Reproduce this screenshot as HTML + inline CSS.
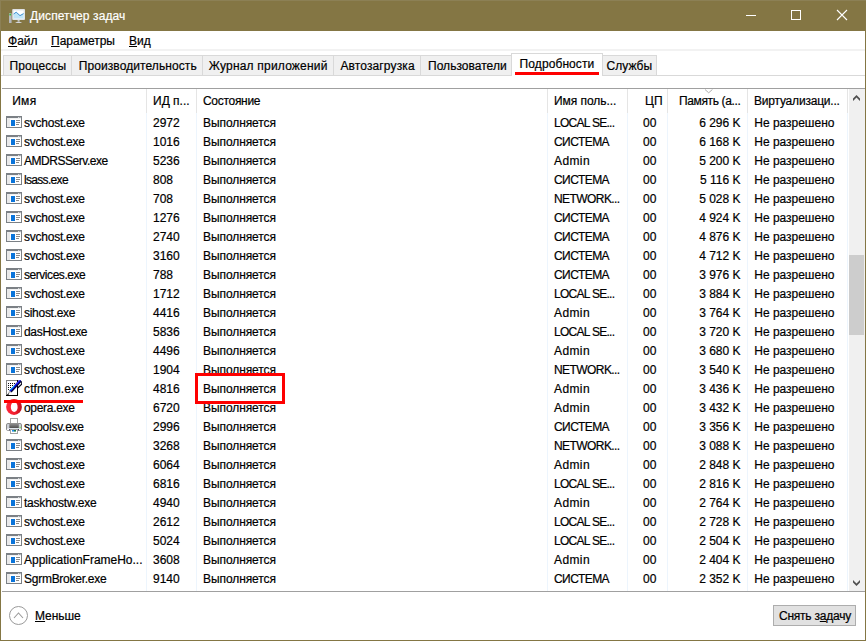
<!DOCTYPE html>
<html lang="ru"><head><meta charset="utf-8"><title>Диспетчер задач</title>
<style>
html,body{margin:0;padding:0;}
body{width:866px;height:641px;overflow:hidden;background:#fff;font-family:"Liberation Sans",sans-serif;font-size:12px;color:#000;position:relative;-webkit-text-stroke:0.2px #000;}
#win{position:absolute;left:0;top:0;width:864px;height:639px;border:1px solid #847644;background:#fff;overflow:hidden;}
.abs{position:absolute;white-space:nowrap;}
#title{position:absolute;left:0;top:0;width:866px;height:31px;background:#847644;box-shadow:inset 1px 1px 0 #8c8055;}
#title .t{-webkit-text-stroke:0.2px #fff;position:absolute;left:30px;top:9px;color:#fff;font-size:12px;line-height:15px;letter-spacing:0.1px;}
#menu span{position:absolute;top:34px;line-height:15px;}
u{text-decoration:underline;text-underline-offset:1px;}
.tab{position:absolute;top:55px;height:21px;box-sizing:border-box;border:1px solid #d9d9d9;border-left:none;background:#f0f0f0;line-height:21px;text-align:center;white-space:nowrap;}
.tab.sel{top:53px;height:23px;background:#fff;border:1px solid #d9d9d9;border-bottom:none;line-height:22px;z-index:2;}
.tl{position:absolute;line-height:15px;white-space:nowrap;z-index:3}
#tabline{position:absolute;left:1px;top:49px;width:864px;height:2px;background:#f2f2f2;}
#tbl{position:absolute;left:2px;top:88px;width:863px;height:504px;box-sizing:border-box;border-top:1px solid #a0a0a0;border-bottom:1px solid #a0a0a0;background:#fff;}
.h{position:absolute;top:94px;line-height:15px;white-space:nowrap;}
.hs{position:absolute;top:89px;width:1px;height:24px;background:#e5e5e5;}
.bs{position:absolute;top:113px;width:1px;height:478px;background:#edf5fd;}
.r{position:absolute;left:0;width:848px;height:19px;line-height:19px;white-space:nowrap;}
.r .c{position:absolute;top:0;}
.r .ic{position:absolute;left:6px;top:0px;}
.n{left:24px}
.p{left:153px}
.s{left:203px;letter-spacing:-0.08px}
.u{left:554px}
.u-l{letter-spacing:-0.72px}
.u-s{letter-spacing:-0.55px}
.u-n{letter-spacing:-0.57px}
.u-a{letter-spacing:0.4px}
.cpu{left:643px}
.m{right:107.5px}
.v{left:754.3px;letter-spacing:-0.02px}
#sb{position:absolute;left:849px;top:89px;width:16px;height:502px;background:#f0f0f0;}
#thumb{position:absolute;left:849px;top:255px;width:15px;height:80px;background:#cdcdcd;}
#btn{position:absolute;left:773px;top:605px;width:83px;height:21px;box-sizing:border-box;border:1px solid #adadad;background:#e1e1e1;text-align:center;line-height:21px;letter-spacing:-0.22px;padding-left:1px}
</style></head><body>
<div id="win"></div>
<div id="title"><svg class="abs" style="left:8px;top:8px" width="18" height="16" viewBox="0 0 18 16"><rect x="1" y="5.2" width="2.6" height="9.8" fill="#b4b7bb"/><rect x="1.4" y="5.8" width="1.6" height="1.6" fill="#30c030"/><rect x="4.2" y="1" width="12.8" height="11" rx="1" fill="#dfe2e5"/><rect x="5.6" y="2.4" width="10" height="8.2" fill="#fff"/><path d="M5.6 6 L8.2 4.2 L12 7.6 L15.6 5.6 V10.6 H5.6Z" fill="#bfe4f7"/><path d="M5.6 6 L8.2 4.2 L12 7.6 L15.6 5.6" stroke="#2a84cc" stroke-width="0.9" fill="none"/><rect x="9.6" y="12" width="2" height="1.6" fill="#c4c7ca"/><path d="M7 15 Q10.6 12.4 14.2 15Z" fill="#d4d7da"/></svg><span class="t">Диспетчер задач</span>
<svg class="abs" style="left:745px;top:10px" width="12" height="12" viewBox="0 0 12 12"><path d="M1 5.5H11" stroke="#fff" stroke-width="1"/></svg>
<svg class="abs" style="left:790px;top:9px" width="12" height="12" viewBox="0 0 12 12"><rect x="1.5" y="1.5" width="9" height="9" fill="none" stroke="#fff" stroke-width="1"/></svg>
<svg class="abs" style="left:836px;top:9px" width="12" height="12" viewBox="0 0 12 12"><path d="M1 1L11 11M11 1L1 11" stroke="#fff" stroke-width="1.1"/></svg>
</div>
<div id="menu"><span style="left:8px"><u>Ф</u>айл</span><span style="left:51px"><u>П</u>араметры</span><span style="left:129px"><u>В</u>ид</span></div>
<div id="tabline"></div><div class="abs" style="left:1px;top:75px;width:864px;height:1px;background:#d9d9d9"></div>
<div class="tab" style="left:3px;width:69px;border-left:1px solid #d9d9d9"></div>
<span class="tl" style="left:9.6px;top:59px;letter-spacing:0.06px">Процессы</span>
<div class="tab" style="left:72px;width:131px"></div>
<span class="tl" style="left:78.7px;top:59px;letter-spacing:0.09px">Производительность</span>
<div class="tab" style="left:203px;width:131px"></div>
<span class="tl" style="left:208.8px;top:59px;letter-spacing:0.2px">Журнал приложений</span>
<div class="tab" style="left:334px;width:87px"></div>
<span class="tl" style="left:340.4px;top:59px;letter-spacing:0.13px">Автозагрузка</span>
<div class="tab" style="left:421px;width:91px"></div>
<span class="tl" style="left:428.0px;top:59px;letter-spacing:0.03px">Пользователи</span>
<div class="tab sel" style="left:511px;width:92px"></div>
<span class="tl" style="left:519.6px;top:57px;letter-spacing:0.09px">Подробности</span>
<div class="tab" style="left:603px;width:54px"></div>
<span class="tl" style="left:606.6px;top:59px;letter-spacing:0px">Службы</span>
<div class="abs" style="left:515px;top:72px;width:84px;height:3px;background:#fe0000;z-index:3"></div>
<div id="tbl"></div>
<span class="h" style="left:12.2px;letter-spacing:0.3px">Имя</span>
<span class="h" style="left:153px">ИД п...</span>
<span class="h" style="left:203px;letter-spacing:-0.3px">Состояние</span>
<span class="h" style="left:554px;letter-spacing:-0.05px">Имя поль...</span>
<span class="h" style="left:645px">ЦП</span>
<span class="h" style="left:679px;letter-spacing:-0.37px">Память (а...</span>
<span class="h" style="left:754px;letter-spacing:-0.2px">Виртуализаци...</span>
<div class="hs" style="left:146px"></div><div class="hs" style="left:196px"></div><div class="hs" style="left:547px"></div><div class="hs" style="left:627px"></div><div class="hs" style="left:667px"></div><div class="hs" style="left:747px"></div><div class="hs" style="left:847px"></div>
<div class="bs" style="left:146px"></div><div class="bs" style="left:196px"></div><div class="bs" style="left:547px"></div><div class="bs" style="left:627px"></div><div class="bs" style="left:667px"></div><div class="bs" style="left:747px"></div><div class="bs" style="left:847px"></div>
<div class="r" style="top:114px"><svg class="ic" width="16" height="16" viewBox="0 0 16 16"><rect x="0.5" y="2.5" width="15" height="11" fill="#fff" stroke="#7b8085"/><rect x="0" y="2" width="16" height="2.1" fill="#7b8085"/><rect x="12" y="3" width="1" height="1" fill="#d8dadc"/><rect x="13.6" y="3" width="1" height="1" fill="#d8dadc"/><rect x="1" y="4.2" width="3" height="8.8" fill="#e9e9e9"/><rect x="5" y="6" width="4" height="6" fill="#0a74da"/><rect x="10" y="6" width="4" height="1" fill="#8a8a8a"/><rect x="10" y="8" width="4" height="1" fill="#8a8a8a"/><rect x="10" y="10" width="3" height="1" fill="#8a8a8a"/></svg><span class="c n" style="letter-spacing:-0.24px">svchost.exe</span><span class="c p">2972</span><span class="c s">Выполняется</span><span class="c u u-l">LOCAL SE...</span><span class="c cpu">00</span><span class="c m">6 296 K</span><span class="c v">Не разрешено</span></div>
<div class="r" style="top:133px"><svg class="ic" width="16" height="16" viewBox="0 0 16 16"><rect x="0.5" y="2.5" width="15" height="11" fill="#fff" stroke="#7b8085"/><rect x="0" y="2" width="16" height="2.1" fill="#7b8085"/><rect x="12" y="3" width="1" height="1" fill="#d8dadc"/><rect x="13.6" y="3" width="1" height="1" fill="#d8dadc"/><rect x="1" y="4.2" width="3" height="8.8" fill="#e9e9e9"/><rect x="5" y="6" width="4" height="6" fill="#0a74da"/><rect x="10" y="6" width="4" height="1" fill="#8a8a8a"/><rect x="10" y="8" width="4" height="1" fill="#8a8a8a"/><rect x="10" y="10" width="3" height="1" fill="#8a8a8a"/></svg><span class="c n" style="letter-spacing:-0.24px">svchost.exe</span><span class="c p">1016</span><span class="c s">Выполняется</span><span class="c u u-s">СИСТЕМА</span><span class="c cpu">00</span><span class="c m">6 168 K</span><span class="c v">Не разрешено</span></div>
<div class="r" style="top:152px"><svg class="ic" width="16" height="16" viewBox="0 0 16 16"><rect x="0.5" y="2.5" width="15" height="11" fill="#fff" stroke="#7b8085"/><rect x="0" y="2" width="16" height="2.1" fill="#7b8085"/><rect x="12" y="3" width="1" height="1" fill="#d8dadc"/><rect x="13.6" y="3" width="1" height="1" fill="#d8dadc"/><rect x="1" y="4.2" width="3" height="8.8" fill="#e9e9e9"/><rect x="5" y="6" width="4" height="6" fill="#0a74da"/><rect x="10" y="6" width="4" height="1" fill="#8a8a8a"/><rect x="10" y="8" width="4" height="1" fill="#8a8a8a"/><rect x="10" y="10" width="3" height="1" fill="#8a8a8a"/></svg><span class="c n" style="letter-spacing:-0.46px">AMDRSServ.exe</span><span class="c p">5236</span><span class="c s">Выполняется</span><span class="c u u-a">Admin</span><span class="c cpu">00</span><span class="c m">5 200 K</span><span class="c v">Не разрешено</span></div>
<div class="r" style="top:171px"><svg class="ic" width="16" height="16" viewBox="0 0 16 16"><rect x="0.5" y="2.5" width="15" height="11" fill="#fff" stroke="#7b8085"/><rect x="0" y="2" width="16" height="2.1" fill="#7b8085"/><rect x="12" y="3" width="1" height="1" fill="#d8dadc"/><rect x="13.6" y="3" width="1" height="1" fill="#d8dadc"/><rect x="1" y="4.2" width="3" height="8.8" fill="#e9e9e9"/><rect x="5" y="6" width="4" height="6" fill="#0a74da"/><rect x="10" y="6" width="4" height="1" fill="#8a8a8a"/><rect x="10" y="8" width="4" height="1" fill="#8a8a8a"/><rect x="10" y="10" width="3" height="1" fill="#8a8a8a"/></svg><span class="c n" style="letter-spacing:-0.68px">lsass.exe</span><span class="c p">808</span><span class="c s">Выполняется</span><span class="c u u-s">СИСТЕМА</span><span class="c cpu">00</span><span class="c m">5 116 K</span><span class="c v">Не разрешено</span></div>
<div class="r" style="top:190px"><svg class="ic" width="16" height="16" viewBox="0 0 16 16"><rect x="0.5" y="2.5" width="15" height="11" fill="#fff" stroke="#7b8085"/><rect x="0" y="2" width="16" height="2.1" fill="#7b8085"/><rect x="12" y="3" width="1" height="1" fill="#d8dadc"/><rect x="13.6" y="3" width="1" height="1" fill="#d8dadc"/><rect x="1" y="4.2" width="3" height="8.8" fill="#e9e9e9"/><rect x="5" y="6" width="4" height="6" fill="#0a74da"/><rect x="10" y="6" width="4" height="1" fill="#8a8a8a"/><rect x="10" y="8" width="4" height="1" fill="#8a8a8a"/><rect x="10" y="10" width="3" height="1" fill="#8a8a8a"/></svg><span class="c n" style="letter-spacing:-0.24px">svchost.exe</span><span class="c p">708</span><span class="c s">Выполняется</span><span class="c u u-n">NETWORK...</span><span class="c cpu">00</span><span class="c m">5 028 K</span><span class="c v">Не разрешено</span></div>
<div class="r" style="top:209px"><svg class="ic" width="16" height="16" viewBox="0 0 16 16"><rect x="0.5" y="2.5" width="15" height="11" fill="#fff" stroke="#7b8085"/><rect x="0" y="2" width="16" height="2.1" fill="#7b8085"/><rect x="12" y="3" width="1" height="1" fill="#d8dadc"/><rect x="13.6" y="3" width="1" height="1" fill="#d8dadc"/><rect x="1" y="4.2" width="3" height="8.8" fill="#e9e9e9"/><rect x="5" y="6" width="4" height="6" fill="#0a74da"/><rect x="10" y="6" width="4" height="1" fill="#8a8a8a"/><rect x="10" y="8" width="4" height="1" fill="#8a8a8a"/><rect x="10" y="10" width="3" height="1" fill="#8a8a8a"/></svg><span class="c n" style="letter-spacing:-0.24px">svchost.exe</span><span class="c p">1276</span><span class="c s">Выполняется</span><span class="c u u-s">СИСТЕМА</span><span class="c cpu">00</span><span class="c m">4 924 K</span><span class="c v">Не разрешено</span></div>
<div class="r" style="top:228px"><svg class="ic" width="16" height="16" viewBox="0 0 16 16"><rect x="0.5" y="2.5" width="15" height="11" fill="#fff" stroke="#7b8085"/><rect x="0" y="2" width="16" height="2.1" fill="#7b8085"/><rect x="12" y="3" width="1" height="1" fill="#d8dadc"/><rect x="13.6" y="3" width="1" height="1" fill="#d8dadc"/><rect x="1" y="4.2" width="3" height="8.8" fill="#e9e9e9"/><rect x="5" y="6" width="4" height="6" fill="#0a74da"/><rect x="10" y="6" width="4" height="1" fill="#8a8a8a"/><rect x="10" y="8" width="4" height="1" fill="#8a8a8a"/><rect x="10" y="10" width="3" height="1" fill="#8a8a8a"/></svg><span class="c n" style="letter-spacing:-0.24px">svchost.exe</span><span class="c p">2740</span><span class="c s">Выполняется</span><span class="c u u-s">СИСТЕМА</span><span class="c cpu">00</span><span class="c m">4 876 K</span><span class="c v">Не разрешено</span></div>
<div class="r" style="top:247px"><svg class="ic" width="16" height="16" viewBox="0 0 16 16"><rect x="0.5" y="2.5" width="15" height="11" fill="#fff" stroke="#7b8085"/><rect x="0" y="2" width="16" height="2.1" fill="#7b8085"/><rect x="12" y="3" width="1" height="1" fill="#d8dadc"/><rect x="13.6" y="3" width="1" height="1" fill="#d8dadc"/><rect x="1" y="4.2" width="3" height="8.8" fill="#e9e9e9"/><rect x="5" y="6" width="4" height="6" fill="#0a74da"/><rect x="10" y="6" width="4" height="1" fill="#8a8a8a"/><rect x="10" y="8" width="4" height="1" fill="#8a8a8a"/><rect x="10" y="10" width="3" height="1" fill="#8a8a8a"/></svg><span class="c n" style="letter-spacing:-0.24px">svchost.exe</span><span class="c p">3160</span><span class="c s">Выполняется</span><span class="c u u-s">СИСТЕМА</span><span class="c cpu">00</span><span class="c m">4 712 K</span><span class="c v">Не разрешено</span></div>
<div class="r" style="top:266px"><svg class="ic" width="16" height="16" viewBox="0 0 16 16"><rect x="0.5" y="2.5" width="15" height="11" fill="#fff" stroke="#7b8085"/><rect x="0" y="2" width="16" height="2.1" fill="#7b8085"/><rect x="12" y="3" width="1" height="1" fill="#d8dadc"/><rect x="13.6" y="3" width="1" height="1" fill="#d8dadc"/><rect x="1" y="4.2" width="3" height="8.8" fill="#e9e9e9"/><rect x="5" y="6" width="4" height="6" fill="#0a74da"/><rect x="10" y="6" width="4" height="1" fill="#8a8a8a"/><rect x="10" y="8" width="4" height="1" fill="#8a8a8a"/><rect x="10" y="10" width="3" height="1" fill="#8a8a8a"/></svg><span class="c n" style="letter-spacing:-0.45px">services.exe</span><span class="c p">788</span><span class="c s">Выполняется</span><span class="c u u-s">СИСТЕМА</span><span class="c cpu">00</span><span class="c m">3 976 K</span><span class="c v">Не разрешено</span></div>
<div class="r" style="top:285px"><svg class="ic" width="16" height="16" viewBox="0 0 16 16"><rect x="0.5" y="2.5" width="15" height="11" fill="#fff" stroke="#7b8085"/><rect x="0" y="2" width="16" height="2.1" fill="#7b8085"/><rect x="12" y="3" width="1" height="1" fill="#d8dadc"/><rect x="13.6" y="3" width="1" height="1" fill="#d8dadc"/><rect x="1" y="4.2" width="3" height="8.8" fill="#e9e9e9"/><rect x="5" y="6" width="4" height="6" fill="#0a74da"/><rect x="10" y="6" width="4" height="1" fill="#8a8a8a"/><rect x="10" y="8" width="4" height="1" fill="#8a8a8a"/><rect x="10" y="10" width="3" height="1" fill="#8a8a8a"/></svg><span class="c n" style="letter-spacing:-0.24px">svchost.exe</span><span class="c p">1712</span><span class="c s">Выполняется</span><span class="c u u-l">LOCAL SE...</span><span class="c cpu">00</span><span class="c m">3 884 K</span><span class="c v">Не разрешено</span></div>
<div class="r" style="top:304px"><svg class="ic" width="16" height="16" viewBox="0 0 16 16"><rect x="0.5" y="2.5" width="15" height="11" fill="#fff" stroke="#7b8085"/><rect x="0" y="2" width="16" height="2.1" fill="#7b8085"/><rect x="12" y="3" width="1" height="1" fill="#d8dadc"/><rect x="13.6" y="3" width="1" height="1" fill="#d8dadc"/><rect x="1" y="4.2" width="3" height="8.8" fill="#e9e9e9"/><rect x="5" y="6" width="4" height="6" fill="#0a74da"/><rect x="10" y="6" width="4" height="1" fill="#8a8a8a"/><rect x="10" y="8" width="4" height="1" fill="#8a8a8a"/><rect x="10" y="10" width="3" height="1" fill="#8a8a8a"/></svg><span class="c n" style="letter-spacing:-0.28px">sihost.exe</span><span class="c p">4416</span><span class="c s">Выполняется</span><span class="c u u-a">Admin</span><span class="c cpu">00</span><span class="c m">3 764 K</span><span class="c v">Не разрешено</span></div>
<div class="r" style="top:323px"><svg class="ic" width="16" height="16" viewBox="0 0 16 16"><rect x="0.5" y="2.5" width="15" height="11" fill="#fff" stroke="#7b8085"/><rect x="0" y="2" width="16" height="2.1" fill="#7b8085"/><rect x="12" y="3" width="1" height="1" fill="#d8dadc"/><rect x="13.6" y="3" width="1" height="1" fill="#d8dadc"/><rect x="1" y="4.2" width="3" height="8.8" fill="#e9e9e9"/><rect x="5" y="6" width="4" height="6" fill="#0a74da"/><rect x="10" y="6" width="4" height="1" fill="#8a8a8a"/><rect x="10" y="8" width="4" height="1" fill="#8a8a8a"/><rect x="10" y="10" width="3" height="1" fill="#8a8a8a"/></svg><span class="c n" style="letter-spacing:-0.32px">dasHost.exe</span><span class="c p">5836</span><span class="c s">Выполняется</span><span class="c u u-l">LOCAL SE...</span><span class="c cpu">00</span><span class="c m">3 720 K</span><span class="c v">Не разрешено</span></div>
<div class="r" style="top:342px"><svg class="ic" width="16" height="16" viewBox="0 0 16 16"><rect x="0.5" y="2.5" width="15" height="11" fill="#fff" stroke="#7b8085"/><rect x="0" y="2" width="16" height="2.1" fill="#7b8085"/><rect x="12" y="3" width="1" height="1" fill="#d8dadc"/><rect x="13.6" y="3" width="1" height="1" fill="#d8dadc"/><rect x="1" y="4.2" width="3" height="8.8" fill="#e9e9e9"/><rect x="5" y="6" width="4" height="6" fill="#0a74da"/><rect x="10" y="6" width="4" height="1" fill="#8a8a8a"/><rect x="10" y="8" width="4" height="1" fill="#8a8a8a"/><rect x="10" y="10" width="3" height="1" fill="#8a8a8a"/></svg><span class="c n" style="letter-spacing:-0.24px">svchost.exe</span><span class="c p">4496</span><span class="c s">Выполняется</span><span class="c u u-a">Admin</span><span class="c cpu">00</span><span class="c m">3 680 K</span><span class="c v">Не разрешено</span></div>
<div class="r" style="top:361px"><svg class="ic" width="16" height="16" viewBox="0 0 16 16"><rect x="0.5" y="2.5" width="15" height="11" fill="#fff" stroke="#7b8085"/><rect x="0" y="2" width="16" height="2.1" fill="#7b8085"/><rect x="12" y="3" width="1" height="1" fill="#d8dadc"/><rect x="13.6" y="3" width="1" height="1" fill="#d8dadc"/><rect x="1" y="4.2" width="3" height="8.8" fill="#e9e9e9"/><rect x="5" y="6" width="4" height="6" fill="#0a74da"/><rect x="10" y="6" width="4" height="1" fill="#8a8a8a"/><rect x="10" y="8" width="4" height="1" fill="#8a8a8a"/><rect x="10" y="10" width="3" height="1" fill="#8a8a8a"/></svg><span class="c n" style="letter-spacing:-0.24px">svchost.exe</span><span class="c p">1904</span><span class="c s">Выполняется</span><span class="c u u-n">NETWORK...</span><span class="c cpu">00</span><span class="c m">3 540 K</span><span class="c v">Не разрешено</span></div>
<div class="r" style="top:380px"><svg class="ic" width="16" height="16" viewBox="0 0 16 16"><rect x="0" y="0" width="12" height="16" fill="#000"/><rect x="0" y="0" width="11" height="15" fill="#858585"/><rect x="1" y="1" width="10" height="14" fill="#fff"/><g fill="#111"><rect x="2" y="3" width="1" height="1"/><rect x="4" y="3" width="1" height="1"/><rect x="6" y="3" width="1" height="1"/><rect x="8" y="3" width="1" height="1"/><rect x="2" y="5" width="1" height="1"/><rect x="4" y="5" width="1" height="1"/><rect x="6" y="5" width="1" height="1"/><rect x="2" y="7" width="1" height="1"/><rect x="4" y="7" width="1" height="1"/><rect x="2" y="9" width="1" height="1"/></g><path d="M14.7 0.5 L4.5 11.5" stroke="#03033c" stroke-width="2.9" fill="none"/><path d="M15.7 1.4 L15.7 4.2 L11.6 8" stroke="#000018" stroke-width="1.1" fill="none"/><path d="M14.2 0.2 L4 11" stroke="#0808f0" stroke-width="1.7" fill="none"/><path d="M8.6 5.5 L4.2 10.3" stroke="#08dcff" stroke-width="1" fill="none"/><path d="M13.6 0.4 L9.4 4.8" stroke="#b0b0e8" stroke-width="0.7" stroke-dasharray="0.7 0.9" fill="none"/><path d="M3.2 10.4 L4.9 12.2 L1.6 14.4 Z" fill="#b8b8b8"/><path d="M0.2 15.8 L2.4 13.2 L3.2 14.2 Z" fill="#000"/></svg><span class="c n" style="letter-spacing:0.14px">ctfmon.exe</span><span class="c p">4816</span><span class="c s">Выполняется</span><span class="c u u-a">Admin</span><span class="c cpu">00</span><span class="c m">3 436 K</span><span class="c v">Не разрешено</span></div>
<div class="r" style="top:399px"><svg class="ic" width="16" height="16" viewBox="0 0 16 16"><defs><linearGradient id="og" x1="0" x2="1" y1="0" y2="0"><stop offset="0" stop-color="#ff2a3c"/><stop offset="0.6" stop-color="#ee1c2c"/><stop offset="1" stop-color="#b80c1c"/></linearGradient></defs><ellipse cx="8" cy="8" rx="7.9" ry="7.9" fill="url(#og)"/><ellipse cx="8.2" cy="8" rx="3.4" ry="5" fill="#fff"/></svg><span class="c n" style="letter-spacing:-0.3px">opera.exe</span><span class="c p">6720</span><span class="c s">Выполняется</span><span class="c u u-a">Admin</span><span class="c cpu">00</span><span class="c m">3 432 K</span><span class="c v">Не разрешено</span></div>
<div class="r" style="top:418px"><svg class="ic" width="16" height="16" viewBox="0 0 16 16"><defs><linearGradient id="pg" x1="0" x2="0" y1="0" y2="1"><stop offset="0" stop-color="#9a9a9a"/><stop offset="1" stop-color="#505050"/></linearGradient></defs><rect x="4.5" y="0.5" width="7" height="5.5" fill="#fff" stroke="#a2a2a2"/><rect x="0.5" y="5.5" width="15" height="7" rx="1.4" fill="#ccd0d8" stroke="#8a8a8a"/><rect x="3.3" y="5" width="9.5" height="5" fill="url(#pg)"/><rect x="1.2" y="10.6" width="13.6" height="1.6" fill="#fff"/><rect x="3.2" y="10" width="9.6" height="1" fill="#dfe6ee"/><rect x="3.3" y="11" width="1" height="1.4" fill="#1a1a40"/><rect x="11.8" y="11" width="1" height="1.4" fill="#1a1a40"/><rect x="4.5" y="11.5" width="7" height="4" fill="#fff" stroke="#a2a2a2"/><rect x="6" y="12" width="2" height="1.6" fill="#1e8ae8"/><rect x="8" y="12" width="2" height="1.6" fill="#1a7a4a"/><rect x="13.6" y="8.8" width="1.4" height="1.4" fill="#8ae66a"/></svg><span class="c n" style="letter-spacing:-0.25px">spoolsv.exe</span><span class="c p">2996</span><span class="c s">Выполняется</span><span class="c u u-s">СИСТЕМА</span><span class="c cpu">00</span><span class="c m">3 356 K</span><span class="c v">Не разрешено</span></div>
<div class="r" style="top:437px"><svg class="ic" width="16" height="16" viewBox="0 0 16 16"><rect x="0.5" y="2.5" width="15" height="11" fill="#fff" stroke="#7b8085"/><rect x="0" y="2" width="16" height="2.1" fill="#7b8085"/><rect x="12" y="3" width="1" height="1" fill="#d8dadc"/><rect x="13.6" y="3" width="1" height="1" fill="#d8dadc"/><rect x="1" y="4.2" width="3" height="8.8" fill="#e9e9e9"/><rect x="5" y="6" width="4" height="6" fill="#0a74da"/><rect x="10" y="6" width="4" height="1" fill="#8a8a8a"/><rect x="10" y="8" width="4" height="1" fill="#8a8a8a"/><rect x="10" y="10" width="3" height="1" fill="#8a8a8a"/></svg><span class="c n" style="letter-spacing:-0.24px">svchost.exe</span><span class="c p">3268</span><span class="c s">Выполняется</span><span class="c u u-n">NETWORK...</span><span class="c cpu">00</span><span class="c m">3 088 K</span><span class="c v">Не разрешено</span></div>
<div class="r" style="top:456px"><svg class="ic" width="16" height="16" viewBox="0 0 16 16"><rect x="0.5" y="2.5" width="15" height="11" fill="#fff" stroke="#7b8085"/><rect x="0" y="2" width="16" height="2.1" fill="#7b8085"/><rect x="12" y="3" width="1" height="1" fill="#d8dadc"/><rect x="13.6" y="3" width="1" height="1" fill="#d8dadc"/><rect x="1" y="4.2" width="3" height="8.8" fill="#e9e9e9"/><rect x="5" y="6" width="4" height="6" fill="#0a74da"/><rect x="10" y="6" width="4" height="1" fill="#8a8a8a"/><rect x="10" y="8" width="4" height="1" fill="#8a8a8a"/><rect x="10" y="10" width="3" height="1" fill="#8a8a8a"/></svg><span class="c n" style="letter-spacing:-0.24px">svchost.exe</span><span class="c p">6064</span><span class="c s">Выполняется</span><span class="c u u-a">Admin</span><span class="c cpu">00</span><span class="c m">2 848 K</span><span class="c v">Не разрешено</span></div>
<div class="r" style="top:475px"><svg class="ic" width="16" height="16" viewBox="0 0 16 16"><rect x="0.5" y="2.5" width="15" height="11" fill="#fff" stroke="#7b8085"/><rect x="0" y="2" width="16" height="2.1" fill="#7b8085"/><rect x="12" y="3" width="1" height="1" fill="#d8dadc"/><rect x="13.6" y="3" width="1" height="1" fill="#d8dadc"/><rect x="1" y="4.2" width="3" height="8.8" fill="#e9e9e9"/><rect x="5" y="6" width="4" height="6" fill="#0a74da"/><rect x="10" y="6" width="4" height="1" fill="#8a8a8a"/><rect x="10" y="8" width="4" height="1" fill="#8a8a8a"/><rect x="10" y="10" width="3" height="1" fill="#8a8a8a"/></svg><span class="c n" style="letter-spacing:-0.24px">svchost.exe</span><span class="c p">6816</span><span class="c s">Выполняется</span><span class="c u u-l">LOCAL SE...</span><span class="c cpu">00</span><span class="c m">2 816 K</span><span class="c v">Не разрешено</span></div>
<div class="r" style="top:494px"><svg class="ic" width="16" height="16" viewBox="0 0 16 16"><rect x="0.5" y="2.5" width="15" height="11" fill="#fff" stroke="#7b8085"/><rect x="0" y="2" width="16" height="2.1" fill="#7b8085"/><rect x="12" y="3" width="1" height="1" fill="#d8dadc"/><rect x="13.6" y="3" width="1" height="1" fill="#d8dadc"/><rect x="1" y="4.2" width="3" height="8.8" fill="#e9e9e9"/><rect x="5" y="6" width="4" height="6" fill="#0a74da"/><rect x="10" y="6" width="4" height="1" fill="#8a8a8a"/><rect x="10" y="8" width="4" height="1" fill="#8a8a8a"/><rect x="10" y="10" width="3" height="1" fill="#8a8a8a"/></svg><span class="c n" style="letter-spacing:-0.22px">taskhostw.exe</span><span class="c p">4940</span><span class="c s">Выполняется</span><span class="c u u-a">Admin</span><span class="c cpu">00</span><span class="c m">2 764 K</span><span class="c v">Не разрешено</span></div>
<div class="r" style="top:513px"><svg class="ic" width="16" height="16" viewBox="0 0 16 16"><rect x="0.5" y="2.5" width="15" height="11" fill="#fff" stroke="#7b8085"/><rect x="0" y="2" width="16" height="2.1" fill="#7b8085"/><rect x="12" y="3" width="1" height="1" fill="#d8dadc"/><rect x="13.6" y="3" width="1" height="1" fill="#d8dadc"/><rect x="1" y="4.2" width="3" height="8.8" fill="#e9e9e9"/><rect x="5" y="6" width="4" height="6" fill="#0a74da"/><rect x="10" y="6" width="4" height="1" fill="#8a8a8a"/><rect x="10" y="8" width="4" height="1" fill="#8a8a8a"/><rect x="10" y="10" width="3" height="1" fill="#8a8a8a"/></svg><span class="c n" style="letter-spacing:-0.24px">svchost.exe</span><span class="c p">2612</span><span class="c s">Выполняется</span><span class="c u u-l">LOCAL SE...</span><span class="c cpu">00</span><span class="c m">2 728 K</span><span class="c v">Не разрешено</span></div>
<div class="r" style="top:532px"><svg class="ic" width="16" height="16" viewBox="0 0 16 16"><rect x="0.5" y="2.5" width="15" height="11" fill="#fff" stroke="#7b8085"/><rect x="0" y="2" width="16" height="2.1" fill="#7b8085"/><rect x="12" y="3" width="1" height="1" fill="#d8dadc"/><rect x="13.6" y="3" width="1" height="1" fill="#d8dadc"/><rect x="1" y="4.2" width="3" height="8.8" fill="#e9e9e9"/><rect x="5" y="6" width="4" height="6" fill="#0a74da"/><rect x="10" y="6" width="4" height="1" fill="#8a8a8a"/><rect x="10" y="8" width="4" height="1" fill="#8a8a8a"/><rect x="10" y="10" width="3" height="1" fill="#8a8a8a"/></svg><span class="c n" style="letter-spacing:-0.24px">svchost.exe</span><span class="c p">5024</span><span class="c s">Выполняется</span><span class="c u u-l">LOCAL SE...</span><span class="c cpu">00</span><span class="c m">2 504 K</span><span class="c v">Не разрешено</span></div>
<div class="r" style="top:551px"><svg class="ic" width="16" height="16" viewBox="0 0 16 16"><rect x="0.5" y="2.5" width="15" height="11" fill="#fff" stroke="#7b8085"/><rect x="0" y="2" width="16" height="2.1" fill="#7b8085"/><rect x="12" y="3" width="1" height="1" fill="#d8dadc"/><rect x="13.6" y="3" width="1" height="1" fill="#d8dadc"/><rect x="1" y="4.2" width="3" height="8.8" fill="#e9e9e9"/><rect x="5" y="6" width="4" height="6" fill="#0a74da"/><rect x="10" y="6" width="4" height="1" fill="#8a8a8a"/><rect x="10" y="8" width="4" height="1" fill="#8a8a8a"/><rect x="10" y="10" width="3" height="1" fill="#8a8a8a"/></svg><span class="c n" style="letter-spacing:-0.01px">ApplicationFrameHo...</span><span class="c p">3608</span><span class="c s">Выполняется</span><span class="c u u-a">Admin</span><span class="c cpu">00</span><span class="c m">2 404 K</span><span class="c v">Не разрешено</span></div>
<div class="r" style="top:570px"><svg class="ic" width="16" height="16" viewBox="0 0 16 16"><rect x="0.5" y="2.5" width="15" height="11" fill="#fff" stroke="#7b8085"/><rect x="0" y="2" width="16" height="2.1" fill="#7b8085"/><rect x="12" y="3" width="1" height="1" fill="#d8dadc"/><rect x="13.6" y="3" width="1" height="1" fill="#d8dadc"/><rect x="1" y="4.2" width="3" height="8.8" fill="#e9e9e9"/><rect x="5" y="6" width="4" height="6" fill="#0a74da"/><rect x="10" y="6" width="4" height="1" fill="#8a8a8a"/><rect x="10" y="8" width="4" height="1" fill="#8a8a8a"/><rect x="10" y="10" width="3" height="1" fill="#8a8a8a"/></svg><span class="c n" style="letter-spacing:-0.26px">SgrmBroker.exe</span><span class="c p">9140</span><span class="c s">Выполняется</span><span class="c u u-s">СИСТЕМА</span><span class="c cpu">00</span><span class="c m">2 352 K</span><span class="c v">Не разрешено</span></div>
<div id="sb"></div><div id="thumb"></div>
<svg class="abs" style="left:849px;top:89px" width="16" height="502" viewBox="0 0 16 502"><path d="M4 9.6L7.5 6L11 9.6V12L7.5 8.4L4 12Z" fill="#505050"/><path d="M4 491L7.5 494.6L11 491V493.4L7.5 497L4 493.4Z" fill="#505050"/></svg>
<svg class="abs" style="left:704px;top:89px" width="10" height="5" viewBox="0 0 10 5"><path d="M1 0.5L4.7 3.8L8.4 0.5" stroke="#a6a6a6" stroke-width="0.9" fill="none"/></svg>
<div class="abs" style="left:4px;top:400px;width:79px;height:3px;background:#fe0000;z-index:5"></div>
<div class="abs" style="left:195px;top:373px;width:90px;height:31px;z-index:5;box-sizing:border-box;border:3px solid #fe0000"></div>
<svg class="abs" style="left:8px;top:605px" width="21" height="21" viewBox="0 0 21 21"><circle cx="10.5" cy="10.5" r="9" fill="#fff" stroke="#9a9a9a" stroke-width="1"/><path d="M6 13L10.5 8L15 13" stroke="#9a9a9a" stroke-width="1.1" fill="none"/></svg>
<span class="abs" style="left:35px;top:609px;line-height:15px;letter-spacing:-0.05px"><u>М</u>еньше</span>
<div id="btn">Снять з<u>а</u>дачу</div>
</body></html>
